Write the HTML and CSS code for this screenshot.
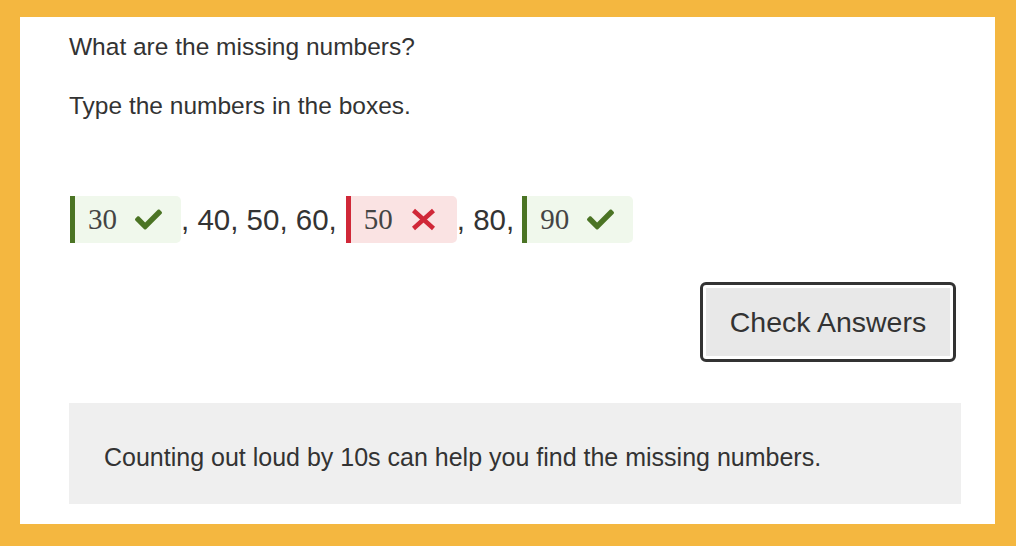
FILE: index.html
```html
<!DOCTYPE html>
<html lang="en">
<head>
    <meta charset="UTF-8">
    <meta name="viewport" content="width=device-width, initial-scale=1.0">
    <title>Missing numbers</title>
    <link rel="stylesheet" href="styles.css">
</head>
<body>
    <div class="panel">
        <p class="prompt">What are the missing numbers?</p>
        <p class="prompt">Type the numbers in the boxes.</p>

        <div class="sequence">
            <span class="answer correct">
                <span class="value">30</span>
                <svg class="mark" viewBox="0 0 512 512"><path d="M173.9 439.4L7.5 273c-10-10-10-26.2 0-36.2l36.2-36.2c10-10 26.2-10 36.2 0L192 312.7 432.1 72.6c10-10 26.2-10 36.2 0l36.2 36.2c10 10 10 26.2 0 36.2L210.1 439.4c-10 10-26.2 10-36.2 0z"/></svg>
            </span>
            <span class="given">, 40, 50, 60,</span>
            <span class="answer wrong">
                <span class="value">50</span>
                <svg class="mark" viewBox="0 0 25 23"><path d="M2.5 2.5L22.5 20.5M22.5 2.5L2.5 20.5"/></svg>
            </span>
            <span class="given">, 80,</span>
            <span class="answer correct">
                <span class="value">90</span>
                <svg class="mark" viewBox="0 0 512 512"><path d="M173.9 439.4L7.5 273c-10-10-10-26.2 0-36.2l36.2-36.2c10-10 26.2-10 36.2 0L192 312.7 432.1 72.6c10-10 26.2-10 36.2 0l36.2 36.2c10 10 10 26.2 0 36.2L210.1 439.4c-10 10-26.2 10-36.2 0z"/></svg>
            </span>
        </div>

        <div class="actions">
            <button class="check">Check Answers</button>
        </div>

        <div class="hint">
            <p>Counting out loud by 10s can help you find the missing numbers.</p>
        </div>
    </div>
</body>
</html>
```

FILE: styles.css
```css
html, body {
    height: 100%;
}

body {
    margin: 0;
    padding: 17px 21px 22px 20px;
    box-sizing: border-box;
    background-color: #f4b740;
    font-family: "Liberation Sans", Arial, sans-serif;
    color: #333;
}

.panel {
    height: 100%;
    background-color: #fff;
    padding: 14px 34px 0 49px;
    box-sizing: border-box;
}

.prompt {
    margin: 0 0 27px;
    font-size: 24.5px;
    line-height: 32px;
}

.sequence {
    display: flex;
    align-items: center;
    margin-top: 74px;
    font-size: 29.5px;
}

.answer {
    display: flex;
    align-items: center;
    width: 111px;
    height: 47px;
    padding-left: 13px;
    box-sizing: border-box;
    border-left: 5px solid;
    border-radius: 0 5px 5px 0;
    margin-left: 1px;
}

.answer.correct {
    border-color: #4b7424;
    background-color: #f0f8ec;
}

.answer.wrong {
    border-color: #d02838;
    background-color: #fae3e3;
    margin-left: 9px;
}

.value {
    font-family: "Liberation Serif", "Times New Roman", serif;
    font-size: 29px;
    color: #444;
    width: 47px;
}

.mark {
    width: 27px;
    height: 27px;
}

.correct .mark {
    fill: #4b7424;
}

.wrong .mark {
    width: 25px;
    height: 23px;
    fill: none;
    stroke: #d02838;
    stroke-width: 4.5;
}

.given {
    margin-left: 0;
}

.given + .answer.correct {
    margin-left: 8px;
}

.actions {
    display: flex;
    justify-content: flex-end;
    margin-top: 39px;
    padding-right: 5px;
}

.check {
    width: 256px;
    height: 80px;
    font-family: "Liberation Sans", Arial, sans-serif;
    font-size: 28.5px;
    color: #333;
    background-color: #e8e8e8;
    border: 3px solid #333;
    border-radius: 6px;
    box-shadow: inset 0 0 0 3px #fff;
    cursor: pointer;
}

.hint {
    margin-top: 41px;
    background-color: #efefef;
    height: 101px;
    display: flex;
    align-items: center;
    padding-left: 35px;
}

.hint p {
    margin: 8px 0 0;
    font-size: 25px;
}
```
